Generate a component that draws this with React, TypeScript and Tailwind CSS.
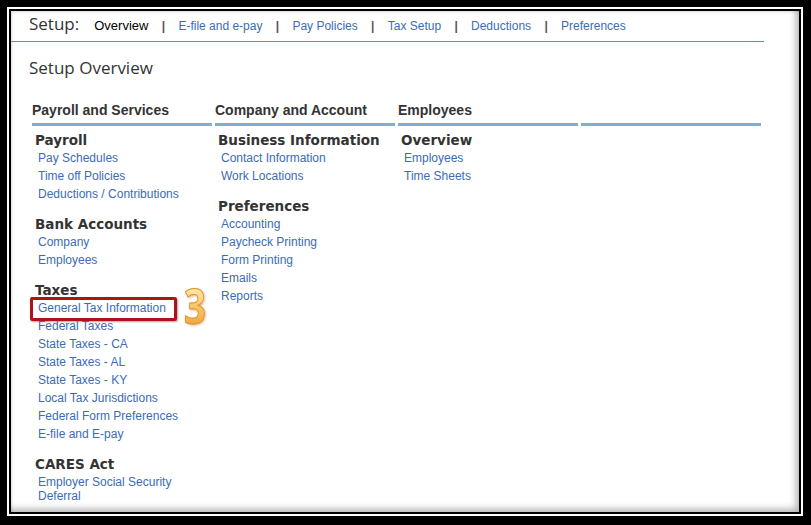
import React from "react";

type Section = { title: string; links: string[] };
type Column = { title: string; sections: Section[] };

const columns: Column[] = [
  {
    title: "Payroll and Services",
    sections: [
      { title: "Payroll", links: ["Pay Schedules", "Time off Policies", "Deductions / Contributions"] },
      { title: "Bank Accounts", links: ["Company", "Employees"] },
      {
        title: "Taxes",
        links: [
          "General Tax Information",
          "Federal Taxes",
          "State Taxes - CA",
          "State Taxes - AL",
          "State Taxes - KY",
          "Local Tax Jurisdictions",
          "Federal Form Preferences",
          "E-file and E-pay",
        ],
      },
      { title: "CARES Act", links: ["Employer Social Security Deferral"] },
    ],
  },
  {
    title: "Company and Account",
    sections: [
      { title: "Business Information", links: ["Contact Information", "Work Locations"] },
      { title: "Preferences", links: ["Accounting", "Paycheck Printing", "Form Printing", "Emails", "Reports"] },
    ],
  },
  {
    title: "Employees",
    sections: [{ title: "Overview", links: ["Employees", "Time Sheets"] }],
  },
  { title: "", sections: [] },
];

const navItems = ["Overview", "E-file and e-pay", "Pay Policies", "Tax Setup", "Deductions", "Preferences"];

const arial = "font-['Liberation_Sans',Arial,sans-serif]";

function SetupLink({ label }: { label: string }) {
  const highlighted = label === "General Tax Information";
  return (
    <li className="relative pl-[6px] text-[12px] leading-[14px] text-[#3b6cb4]">
      <a href="#" className="hover:underline">
        {label}
      </a>
      {highlighted && (
        <>
          {/* callout box + step number */}
          <span className="pointer-events-none absolute left-[-2px] top-[-4px] h-[24px] w-[147px] rounded-[2px] border-[3px] border-[#b0121b] shadow-[1px_1px_2px_rgba(0,0,0,0.35)]" />
          <span className="pointer-events-none absolute left-[152px] top-[-19px] inline-block origin-left scale-x-[0.8] bg-gradient-to-b from-[#fff3c4] via-[#f9c86a] to-[#f09c2c] bg-clip-text font-['Open_Sans',sans-serif] text-[48px] font-bold leading-[48px] text-transparent [-webkit-text-stroke:1px_#e39226] drop-shadow-[1px_1px_1px_rgba(150,90,20,0.4)]">
            3
          </span>
        </>
      )}
    </li>
  );
}

export default function App() {
  return (
    <div className="h-[525px] w-[811px] bg-black pb-[9px] pl-[7px] pr-[8px] pt-[7px]">
      <div className="h-full w-full bg-white p-[2px]">
        <div className="h-full w-full bg-black p-[2px]">
          <div className="h-full w-full overflow-hidden bg-white shadow-[inset_-6px_-6px_7px_-3px_rgba(0,0,0,0.3),inset_2px_2px_3px_-1px_rgba(0,0,0,0.15)]">
            {/* top nav */}
            <div className={`flex h-[31px] w-[753px] items-baseline border-b border-[#6a8bb0] pl-[18px] pt-[1px] ${arial}`}>
              <span className="font-['Open_Sans',sans-serif] text-[17px] leading-[24px] text-[#333]">Setup:</span>
              <nav className="ml-[15px] flex items-baseline text-[12px]">
                {navItems.map((item, i) => (
                  <React.Fragment key={item}>
                    {i > 0 && <span className="px-[13.3px] font-bold text-[#555]">|</span>}
                    <a href="#" className={i === 0 ? "text-[13px] text-black" : "text-[#3b6cb4] hover:underline"}>
                      {item}
                    </a>
                  </React.Fragment>
                ))}
              </nav>
            </div>

            <h1 className="ml-[18px] mt-[14px] font-['Open_Sans',sans-serif] text-[17px] leading-[24px] text-[#333]">
              Setup Overview
            </h1>

            {/* overview columns */}
            <div className="ml-[21px] mt-[22px] grid grid-cols-[repeat(4,180px)] gap-x-[3px]">
              {columns.map((col, ci) => (
                <div key={ci}>
                  <div className={`h-[24px] border-b-[3px] border-[#82abd6] pb-[5px] text-[14px] font-bold leading-[16px] text-[#333] ${arial}`}>
                    {col.title}
                  </div>
                  <div className="mt-[6px]">
                    {col.sections.map((sec) => (
                      <div key={sec.title} className="mb-[15px]">
                        <h3 className="pl-[3px] pt-[1px] font-['DejaVu_Sans',Verdana,sans-serif] text-[13.5px] font-bold leading-[15px] text-[#333]">
                          {sec.title}
                        </h3>
                        <ul className={`mt-[3px] flex flex-col gap-[4px] pr-[8px] ${arial}`}>
                          {sec.links.map((l) => (
                            <SetupLink key={l} label={l} />
                          ))}
                        </ul>
                      </div>
                    ))}
                  </div>
                </div>
              ))}
            </div>
          </div>
        </div>
      </div>
    </div>
  );
}
